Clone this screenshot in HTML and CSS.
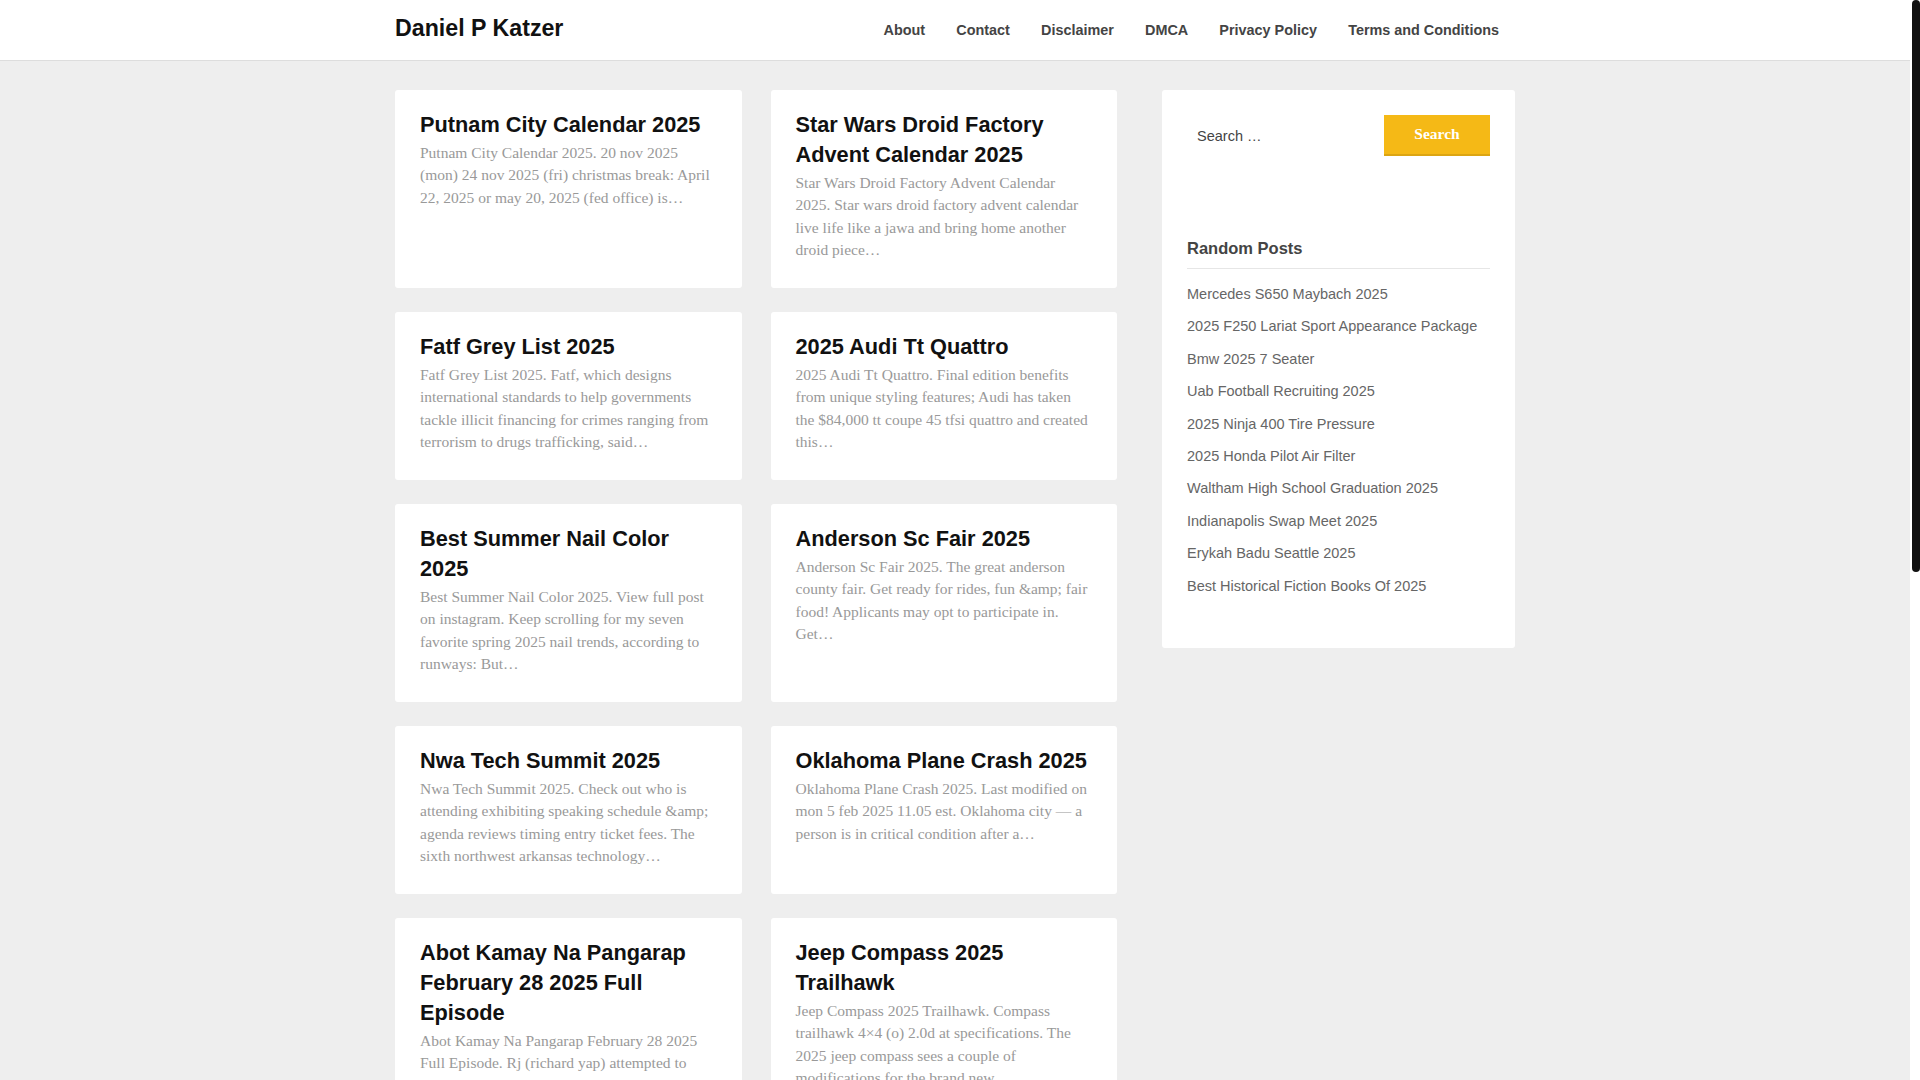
FILE: index.html
```html
<!DOCTYPE html>
<html lang="en">
<head>
<meta charset="utf-8">
<title>Daniel P Katzer</title>
<link rel="stylesheet" href="styles.css">
</head>
<body>
<header class="site-header">
  <div class="container header-inner">
    <a class="site-title" href="#">Daniel P Katzer</a>
    <nav class="main-nav">
      <a href="#">About</a>
      <a href="#">Contact</a>
      <a href="#">Disclaimer</a>
      <a href="#">DMCA</a>
      <a href="#">Privacy Policy</a>
      <a href="#">Terms and Conditions</a>
    </nav>
  </div>
</header>

<div class="container content">
  <main class="posts">
    <article class="card">
      <h2 class="card-title"><a href="#">Putnam City Calendar 2025</a></h2>
      <p class="excerpt">Putnam City Calendar 2025. 20 nov 2025 (mon) 24 nov 2025 (fri) christmas break: April 22, 2025 or may 20, 2025 (fed office) is…</p>
    </article>
    <article class="card">
      <h2 class="card-title"><a href="#">Star Wars Droid Factory Advent Calendar 2025</a></h2>
      <p class="excerpt">Star Wars Droid Factory Advent Calendar 2025. Star wars droid factory advent calendar live life like a jawa and bring home another droid piece…</p>
    </article>
    <article class="card">
      <h2 class="card-title"><a href="#">Fatf Grey List 2025</a></h2>
      <p class="excerpt">Fatf Grey List 2025. Fatf, which designs international standards to help governments tackle illicit financing for crimes ranging from terrorism to drugs trafficking, said…</p>
    </article>
    <article class="card">
      <h2 class="card-title"><a href="#">2025 Audi Tt Quattro</a></h2>
      <p class="excerpt">2025 Audi Tt Quattro. Final edition benefits from unique styling features; Audi has taken the $84,000 tt coupe 45 tfsi quattro and created this…</p>
    </article>
    <article class="card">
      <h2 class="card-title"><a href="#">Best Summer Nail Color 2025</a></h2>
      <p class="excerpt">Best Summer Nail Color 2025. View full post on instagram. Keep scrolling for my seven favorite spring 2025 nail trends, according to runways: But…</p>
    </article>
    <article class="card">
      <h2 class="card-title"><a href="#">Anderson Sc Fair 2025</a></h2>
      <p class="excerpt">Anderson Sc Fair 2025. The great anderson county fair. Get ready for rides, fun &amp;amp; fair food! Applicants may opt to participate in. Get…</p>
    </article>
    <article class="card">
      <h2 class="card-title"><a href="#">Nwa Tech Summit 2025</a></h2>
      <p class="excerpt">Nwa Tech Summit 2025. Check out who is attending exhibiting speaking schedule &amp;amp; agenda reviews timing entry ticket fees. The sixth northwest arkansas technology…</p>
    </article>
    <article class="card">
      <h2 class="card-title"><a href="#">Oklahoma Plane Crash 2025</a></h2>
      <p class="excerpt">Oklahoma Plane Crash 2025. Last modified on mon 5 feb 2025 11.05 est. Oklahoma city — a person is in critical condition after a…</p>
    </article>
    <article class="card">
      <h2 class="card-title"><a href="#">Abot Kamay Na Pangarap February 28 2025 Full Episode</a></h2>
      <p class="excerpt">Abot Kamay Na Pangarap February 28 2025 Full Episode. Rj (richard yap) attempted to reconcile with his family after learning the truth about…</p>
    </article>
    <article class="card">
      <h2 class="card-title"><a href="#">Jeep Compass 2025 Trailhawk</a></h2>
      <p class="excerpt">Jeep Compass 2025 Trailhawk. Compass trailhawk 4×4 (o) 2.0d at specifications. The 2025 jeep compass sees a couple of modifications for the brand new…</p>
    </article>
    <article class="card">
      <h2 class="card-title"><a href="#">Mercedes S650 Maybach 2025</a></h2>
      <p class="excerpt">Mercedes S650 Maybach 2025. The flagship sedan returns with a refined interior, a powerful twelve cylinder engine and a long list of standard…</p>
    </article>
    <article class="card">
      <h2 class="card-title"><a href="#">Uab Football Recruiting 2025</a></h2>
      <p class="excerpt">Uab Football Recruiting 2025. Follow the latest commitments, offers and visits for the blazers as the coaching staff builds the next…</p>
    </article>
    <article class="card">
      <h2 class="card-title"><a href="#">Erykah Badu Seattle 2025</a></h2>
      <p class="excerpt">Erykah Badu Seattle 2025. The queen of neo soul brings her tour to the city for one night only. Tickets, dates and venue details for the…</p>
    </article>
    <article class="card">
      <h2 class="card-title"><a href="#">Indianapolis Swap Meet 2025</a></h2>
      <p class="excerpt">Indianapolis Swap Meet 2025. Thousands of vendors gather at the fairgrounds with parts, tools and collectibles for every kind of…</p>
    </article>
    <nav class="pagination">
      <span class="page current">1</span>
      <a class="page" href="#">2</a>
      <a class="page" href="#">3</a>
      <a class="page" href="#">Next</a>
    </nav>
  </main>

  <aside class="sidebar">
    <form class="search-form" action="#">
      <input class="search-field" type="search" placeholder="Search …">
      <button class="search-submit" type="button">Search</button>
    </form>
    <section class="widget">
      <h3 class="widget-title">Random Posts</h3>
      <ul class="post-list">
        <li><a href="#">Mercedes S650 Maybach 2025</a></li>
        <li><a href="#">2025 F250 Lariat Sport Appearance Package</a></li>
        <li><a href="#">Bmw 2025 7 Seater</a></li>
        <li><a href="#">Uab Football Recruiting 2025</a></li>
        <li><a href="#">2025 Ninja 400 Tire Pressure</a></li>
        <li><a href="#">2025 Honda Pilot Air Filter</a></li>
        <li><a href="#">Waltham High School Graduation 2025</a></li>
        <li><a href="#">Indianapolis Swap Meet 2025</a></li>
        <li><a href="#">Erykah Badu Seattle 2025</a></li>
        <li><a href="#">Best Historical Fiction Books Of 2025</a></li>
      </ul>
    </section>
  </aside>
</div>

<footer class="site-footer">
  <div class="container footer-inner">Copyright © 2025 Daniel P Katzer</div>
</footer>

<div class="scroll-thumb" aria-hidden="true"></div>
</body>
</html>
```

FILE: styles.css
```css
html {
  background: #ffffff;
}
body {
  margin: 0 10px 0 0;
  background: #eeeeee;
  font-family: "Liberation Sans", Arial, sans-serif;
  color: #444;
}
a {
  text-decoration: none;
  color: inherit;
}
.container {
  width: 1120px;
  margin: 0 auto;
}
.site-header {
  background: #ffffff;
  border-bottom: 1px solid #dddddd;
}
.header-inner {
  height: 60px;
  display: flex;
  align-items: center;
  justify-content: space-between;
}
.site-title {
  font-size: 23.2px;
  font-weight: 700;
  color: #111;
  margin-bottom: 4px;
}
.main-nav {
  display: flex;
}
.main-nav a {
  font-size: 14.4px;
  font-weight: 700;
  color: #444;
  padding: 0 15.6px;
}
.main-nav a:last-child {
  padding-right: 16px;
}
.content {
  display: grid;
  grid-template-columns: 722px 353px;
  column-gap: 45px;
  align-items: start;
  padding-top: 29px;
}
.posts {
  display: grid;
  grid-template-columns: 1fr 1fr;
  column-gap: 29px;
  row-gap: 24.5px;
}
.card {
  background: #ffffff;
  border-radius: 3px;
  padding: 20px 25px 26px;
}
.card-title {
  margin: 0 0 1.5px;
  font-size: 21.75px;
  line-height: 30px;
  font-weight: 700;
  color: #111;
}
.excerpt {
  margin: 0;
  font-family: "Liberation Serif", "Times New Roman", serif;
  font-size: 15.5px;
  line-height: 22.5px;
  color: #999;
}
.pagination {
  grid-column: 1 / 3;
  display: flex;
  gap: 8px;
  padding: 10px 0;
}
.page {
  background: #fff;
  border-radius: 3px;
  padding: 8px 14px;
  font-size: 14px;
  color: #444;
}
.page.current {
  background: #f5b916;
  color: #fff;
}
.sidebar {
  background: #ffffff;
  border-radius: 3px;
  padding: 25px;
}
.search-form {
  display: flex;
  gap: 7px;
  height: 41px;
  margin: 0 0 82px;
}
.search-field {
  flex: 1;
  min-width: 0;
  border: none;
  outline: none;
  background: #fff;
  padding: 0 10px;
  font-family: "Liberation Sans", Arial, sans-serif;
  font-size: 14.5px;
  color: #444;
}
.search-field::placeholder {
  color: #444;
  opacity: 1;
}
.search-submit {
  width: 106px;
  border: none;
  border-bottom: 2px solid #dca512;
  background: #f5b916;
  color: #fff;
  font-family: "Liberation Serif", "Times New Roman", serif;
  font-size: 15.5px;
  font-weight: 700;
  padding: 0 0 2px;
}
.widget-title {
  margin: 0;
  font-size: 16.5px;
  line-height: 21px;
  font-weight: 700;
  color: #444;
  padding-bottom: 9px;
  border-bottom: 1px solid #e6e6e6;
}
.post-list {
  list-style: none;
  margin: 9px 0 21px;
  padding: 0;
}
.post-list li {
  padding: 5px 0;
  font-size: 14.5px;
  line-height: 22.4px;
  color: #666;
}
.site-footer {
  margin-top: 40px;
  background: #ffffff;
  border-top: 1px solid #dddddd;
}
.footer-inner {
  padding: 30px 0;
  font-size: 14px;
  color: #777;
  text-align: center;
}
.scroll-thumb {
  position: fixed;
  top: 0;
  right: 0;
  width: 8px;
  height: 572px;
  background: #111111;
  border-radius: 4px;
}
```
